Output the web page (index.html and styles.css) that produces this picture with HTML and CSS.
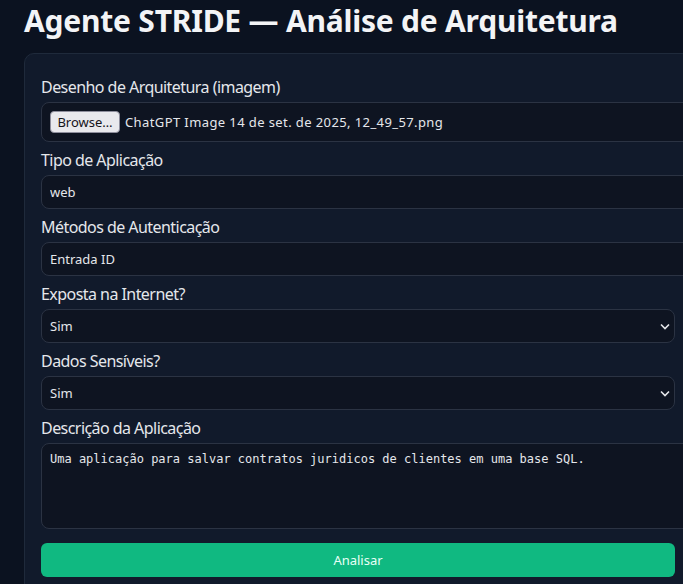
FILE: index.html
```html
<!DOCTYPE html>
<html lang="pt-BR">
<head>
<meta charset="utf-8">
<title>Agente STRIDE</title>
<link rel="stylesheet" href="styles.css">
</head>
<body>
<main class="page">
  <h1 class="title">Agente STRIDE — Análise de Arquitetura</h1>
  <form class="card">
    <div class="field">
      <label class="label">Desenho de Arquitetura (imagem)</label>
      <div class="file-box">
        <span class="file-btn">Browse…</span>
        <span class="file-name">ChatGPT Image 14 de set. de 2025, 12_49_57.png</span>
      </div>
    </div>
    <div class="field">
      <label class="label" for="tipo">Tipo de Aplicação</label>
      <input class="input" id="tipo" type="text" value="web">
    </div>
    <div class="field">
      <label class="label" for="auth">Métodos de Autenticação</label>
      <input class="input" id="auth" type="text" value="Entrada ID">
    </div>
    <div class="field">
      <label class="label" for="exp">Exposta na Internet?</label>
      <div class="select-wrap">
        <select class="select" id="exp"><option>Sim</option><option>Não</option></select>
        <svg class="chev" width="10" height="7" viewBox="0 0 10 7"><path d="M1 1.5 L5 5.5 L9 1.5" fill="none" stroke="#e5e7eb" stroke-width="1.6"/></svg>
      </div>
    </div>
    <div class="field">
      <label class="label" for="sens">Dados Sensíveis?</label>
      <div class="select-wrap">
        <select class="select" id="sens"><option>Sim</option><option>Não</option></select>
        <svg class="chev" width="10" height="7" viewBox="0 0 10 7"><path d="M1 1.5 L5 5.5 L9 1.5" fill="none" stroke="#e5e7eb" stroke-width="1.6"/></svg>
      </div>
    </div>
    <div class="field">
      <label class="label" for="desc">Descrição da Aplicação</label>
      <textarea class="textarea" id="desc">Uma aplicação para salvar contratos juridicos de clientes em uma base SQL.</textarea>
    </div>
    <button class="submit" type="button">Analisar</button>
  </form>
</main>
</body>
</html>
```
FILE: styles.css
```css
html { overflow: hidden; }
body {
  margin: 0;
  background: #0b1220;
  color: #e5e7eb;
  font-family: "Noto Sans", "Open Sans", sans-serif;
}
.page {
  padding: 0 0 0 24px;
  width: 668px;
}
.title {
  margin: 0;
  padding-top: 2px;
  height: 51px;
  font-size: 30px;
  line-height: 38px;
  font-weight: 700;
  letter-spacing: -0.22px;
  color: #f3f4f6;
  white-space: nowrap;
}
.card {
  background: #111a2b;
  border: 1px solid #1f2a3b;
  border-radius: 10px;
  padding: 20px 16px 20px;
  display: flex;
  flex-direction: column;
  gap: 5px;
}
.field {
  display: flex;
  flex-direction: column;
  gap: 4px;
}
.label {
  font-size: 16px;
  line-height: 22px;
  padding-top: 2px;
  letter-spacing: -0.55px;
  color: #e5e7eb;
}
.file-box {
  box-sizing: border-box;
  height: 40px;
  width: calc(100% + 18px);
  background: #0e1421;
  border: 1px solid #2b3343;
  border-radius: 8px;
  padding: 0 8px;
  display: flex;
  align-items: center;
  gap: 5px;
  font-size: 13px;
}
.file-btn {
  box-sizing: border-box;
  height: 22px;
  width: 70px;
  display: flex;
  align-items: center;
  justify-content: center;
  background: #e9e9ed;
  border: 1px solid #8f8f9d;
  border-radius: 4px;
  color: #15141a;
  font-size: 13px;
}
.file-name { color: #e5e7eb; white-space: nowrap; letter-spacing: 0.4px; }
.input, .select, .textarea {
  box-sizing: border-box;
  background: #0e1421;
  border: 1px solid #2b3343;
  border-radius: 8px;
  color: #e5e7eb;
  font-family: "Noto Sans", sans-serif;
  font-size: 13px;
  outline: none;
  margin: 0;
}
.input {
  height: 34px;
  width: calc(100% + 18px);
  padding: 0 8px;
}
.select-wrap {
  position: relative;
}
.select {
  appearance: none;
  -webkit-appearance: none;
  width: 100%;
  height: 34px;
  padding: 0 8px;
}
.chev {
  position: absolute;
  right: 5px;
  top: 14px;
  pointer-events: none;
}
.textarea {
  width: calc(100% + 18px);
  height: 86px;
  padding: 8px;
  resize: none;
  font-family: "DejaVu Sans Mono", monospace;
  font-size: 12px;
  line-height: 15px;
}
.submit {
  margin-top: 9px;
  height: 34px;
  width: 100%;
  border: 0;
  border-radius: 6px;
  background: #10b981;
  color: #e8fff6;
  font-family: "Noto Sans", sans-serif;
  font-size: 13px;
}
```
